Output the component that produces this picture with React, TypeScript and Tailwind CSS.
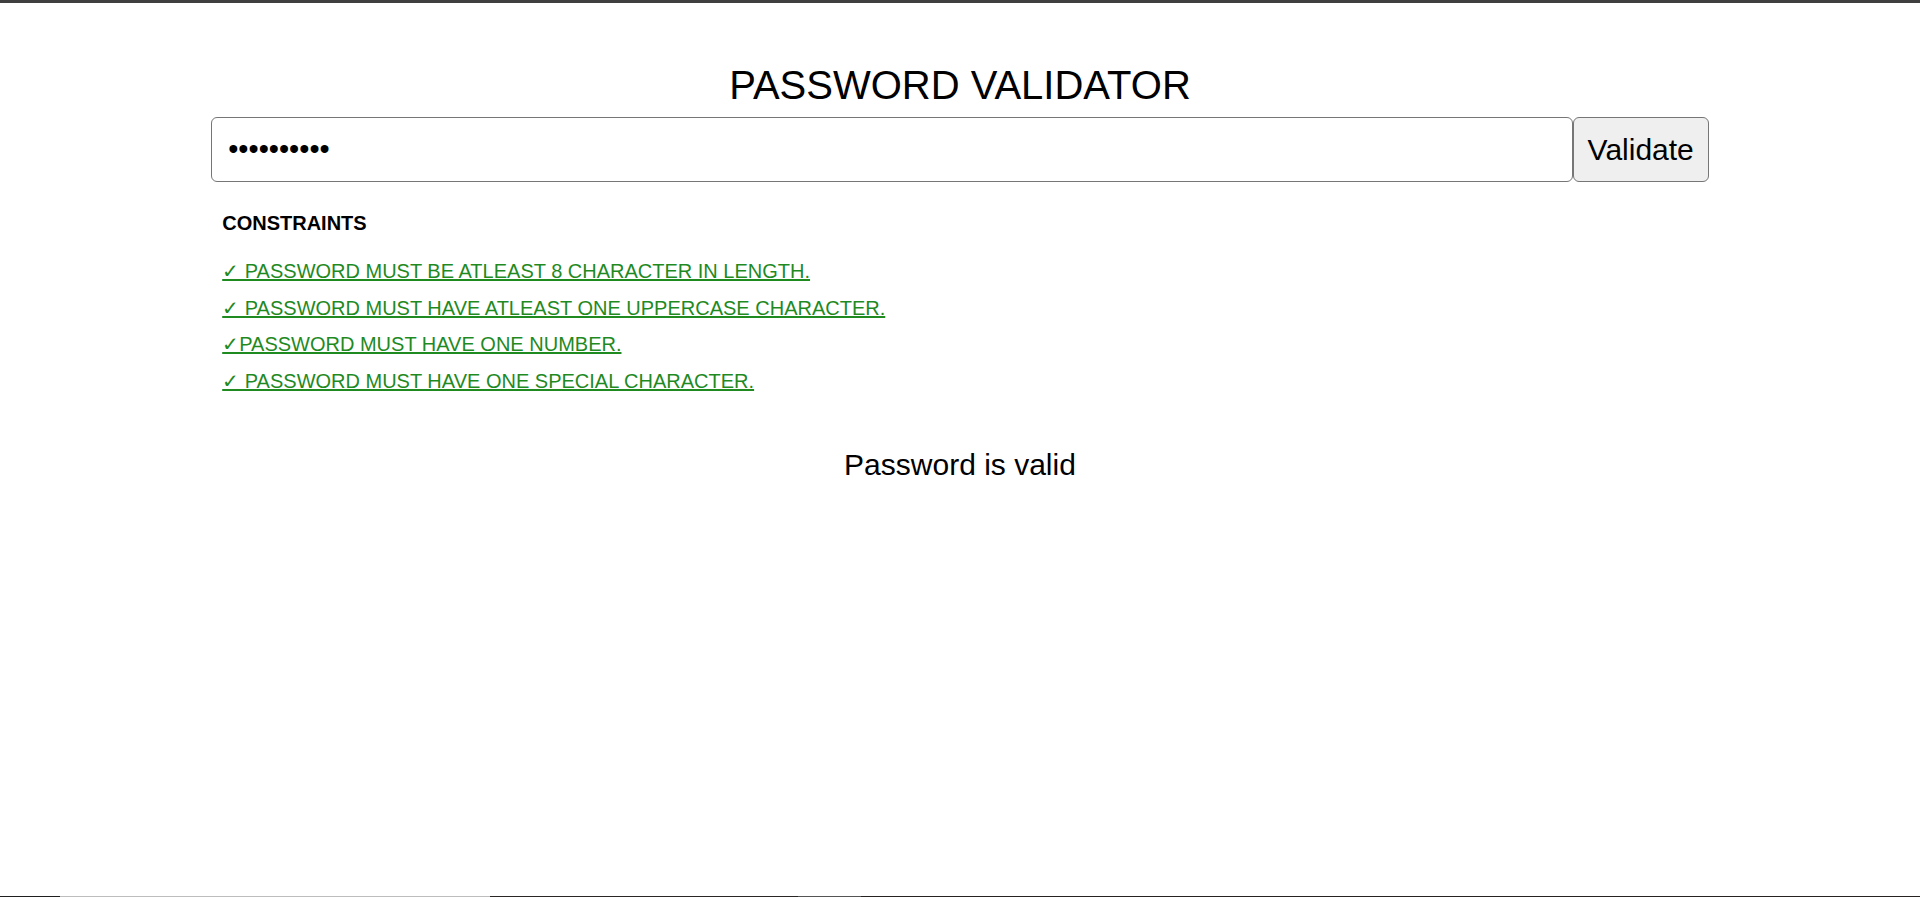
import { useState } from 'react'

const constraints = [
  '✓ PASSWORD MUST BE ATLEAST 8 CHARACTER IN LENGTH.',
  '✓ PASSWORD MUST HAVE ATLEAST ONE UPPERCASE CHARACTER.',
  '✓PASSWORD MUST HAVE ONE NUMBER.',
  '✓ PASSWORD MUST HAVE ONE SPECIAL CHARACTER.',
]

export default function App() {
  const [password, setPassword] = useState('Abcdef@123')

  return (
    <div className="flex h-screen flex-col bg-white font-['Liberation_Sans',Arial,sans-serif] text-black">
      <div className="h-[3px] bg-[#3f3f3f]" />

      <div className="mx-auto w-[78%] flex-1 pt-[60px]">
        <h1 className="text-center text-[40px] leading-[45px]">PASSWORD VALIDATOR</h1>

        <div className="mt-[9px] flex h-[65px]">
          <input
            type="password"
            value={password}
            onChange={(e) => setPassword(e.target.value)}
            className="min-w-0 flex-1 rounded-[6px] border border-[#767676] px-4 text-[29px] outline-none"
          />
          <button className="rounded-[6px] border border-[#767676] bg-[#efefef] px-[14px] text-[30px]">
            Validate
          </button>
        </div>

        <div className="pl-[11px]">
          <h3 className="mt-[30px] text-[20px] font-bold leading-[23px]">CONSTRAINTS</h3>
          <ul className="mt-[25px] flex flex-col gap-[13.7px]">
            {constraints.map((c) => (
              <li key={c} className="text-[20px] leading-[23px] text-[#1f8a1f] underline">
                {c}
              </li>
            ))}
          </ul>
        </div>

        <p className="mt-[55px] text-center text-[30px] leading-[34px]">Password is valid</p>
      </div>

      <div className="flex h-px">
        <div className="w-[60px] bg-[#1f1f1f]" />
        <div className="w-[430px] bg-[#bdbdbd]" />
        <div className="w-[308px] bg-[#2a2626]" />
        <div className="w-[63px] bg-[#555]" />
        <div className="flex-1 bg-[#262222]" />
      </div>
    </div>
  )
}
